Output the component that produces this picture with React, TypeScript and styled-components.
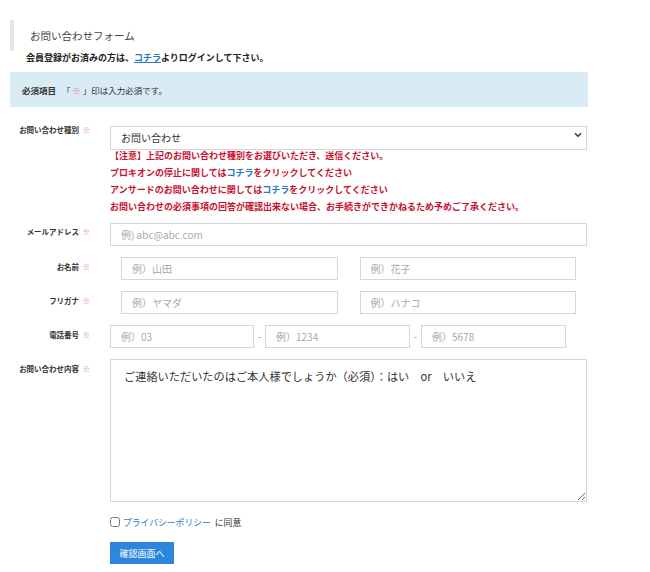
import React from 'react'
import styled, { createGlobalStyle } from 'styled-components'

const GlobalStyle = createGlobalStyle`
  html, body {
    margin: 0;
    padding: 0;
    background: #fff;
  }
  body {
    font-family: "Noto Sans CJK JP", "Noto Sans", sans-serif;
    color: #333;
  }
  * {
    box-sizing: border-box;
  }
`

const PAGE = styled.div`
  width: 588px;
  padding: 20px 0 0 10px;
`

const TITLE = styled.h2`
  margin: 0;
  height: 31px;
  display: flex;
  align-items: center;
  padding-left: 16px;
  border-left: 4px solid #e6e6e6;
  font-size: 10.5px;
  font-weight: 400;
  color: #444;
`

const LOGIN_NOTE = styled.p`
  margin: 0;
  padding-left: 16px;
  height: 13px;
  line-height: 13px;
  font-size: 9px;
  font-weight: 700;
  color: #222;
`

const LINK = styled.a<{ $underline?: boolean }>`
  color: #2a78c0;
  text-decoration: ${({ $underline }) => ($underline ? 'underline' : 'none')};
  cursor: pointer;
`

const INFO_BOX = styled.div`
  margin-top: 8px;
  height: 35px;
  display: flex;
  align-items: center;
  padding: 0 12px;
  background: #d9ebf5;
  font-size: 8.5px;
  color: #333;
  white-space: pre;
  b {
    font-weight: 700;
    margin-right: 4px;
  }
`

const MARK = styled.span`
  color: #e48d8d;
  font-weight: 400;
`

const FORM = styled.form`
  margin-top: 16px;
  display: flex;
  flex-direction: column;
`

const ROW = styled.div<{ $gap?: number }>`
  display: grid;
  grid-template-columns: 100px 477px;
  margin-bottom: ${({ $gap }) => $gap ?? 11}px;
`

const LABEL = styled.label<{ $top?: number }>`
  text-align: right;
  padding-right: 20px;
  padding-top: ${({ $top }) => $top ?? 5}px;
  font-size: 7.5px;
  font-weight: 700;
  line-height: 10px;
  color: #333;
  white-space: pre;
`

const FIELD = styled.div`
  display: flex;
  flex-direction: column;
`

const SELECT_WRAP = styled.div`
  position: relative;
  height: 24px;
  svg {
    position: absolute;
    right: 5px;
    top: 9px;
    pointer-events: none;
  }
`

const SELECT = styled.select`
  appearance: none;
  width: 100%;
  height: 24px;
  padding: 0 10px;
  border: 1px solid #d6d6d6;
  border-radius: 0;
  background: #fff;
  font-family: inherit;
  font-size: 10px;
  color: #333;
  outline: none;
`

const NOTES = styled.div`
  font-size: 9px;
  font-weight: 700;
  line-height: 17px;
  color: #c8102e;
  white-space: nowrap;
  margin-bottom: 8px;
`

const INPUT = styled.input<{ $width?: number }>`
  height: 23px;
  width: ${({ $width }) => ($width ? `${$width}px` : '100%')};
  flex: ${({ $width }) => ($width ? '0 0 auto' : '1 1 0')};
  min-width: 0;
  padding: 0 10px;
  border: 1px solid #d6d6d6;
  border-radius: 0;
  background: #fff;
  font-family: inherit;
  font-size: 10px;
  color: #333;
  outline: none;
  &::placeholder {
    color: #a8a8a8;
  }
`

const PAIR = styled.div`
  display: flex;
  gap: 22px;
  padding: 0 11px;
`

const PHONE = styled.div`
  display: flex;
  align-items: center;
`

const DASH = styled.span`
  width: 11px;
  text-align: center;
  font-size: 9px;
  color: #888;
`

const TEXTAREA = styled.textarea`
  height: 143px;
  width: 100%;
  padding: 8px 13px;
  border: 1px solid #d6d6d6;
  border-radius: 0;
  font-family: inherit;
  font-size: 11.2px;
  line-height: 16px;
  color: #333;
  outline: none;
`

const AGREE = styled.div`
  margin: 12px 0 0 100px;
  display: flex;
  align-items: center;
  height: 16px;
  font-size: 8.8px;
  color: #333;
  input {
    width: 10px;
    height: 10px;
    margin: 0 3px 0 0;
  }
  a {
    margin-right: 4px;
  }
`

const SUBMIT = styled.button`
  margin: 12px 0 0 100px;
  width: 64px;
  height: 22px;
  border: none;
  border-radius: 0;
  background: #2b86dc;
  color: #fff;
  font-family: inherit;
  font-size: 9px;
  cursor: pointer;
`

const Chevron = () => (
  <svg width="8" height="6" viewBox="0 0 8 6">
    <path d="M1 1.2 L4 4.2 L7 1.2" fill="none" stroke="#333" strokeWidth="1.5" />
  </svg>
)

const Req = () => <MARK>{'  ※'}</MARK>

export default function App() {
  return (
    <PAGE>
      <GlobalStyle />
      <TITLE>お問い合わせフォーム</TITLE>
      <LOGIN_NOTE>
        会員登録がお済みの方は、<LINK $underline>コチラ</LINK>よりログインして下さい。
      </LOGIN_NOTE>
      <INFO_BOX>
        <b>必須項目</b>{' 「 '}<MARK>※</MARK>{' 」印は入力必須です。'}
      </INFO_BOX>

      <FORM onSubmit={(e) => e.preventDefault()}>
        <ROW $gap={0}>
          <LABEL $top={2}>
            お問い合わせ種別<Req />
          </LABEL>
          <FIELD>
            <SELECT_WRAP>
              <SELECT defaultValue="inquiry">
                <option value="inquiry">お問い合わせ</option>
              </SELECT>
              <Chevron />
            </SELECT_WRAP>
            <NOTES>
              <div>【注意】上記のお問い合わせ種別をお選びいただき、送信ください。</div>
              <div>
                プロキオンの停止に関しては<LINK>コチラ</LINK>をクリックしてください
              </div>
              <div>
                アンサードのお問い合わせに関しては<LINK>コチラ</LINK>をクリックしてください
              </div>
              <div>お問い合わせの必須事項の回答が確認出来ない場合、お手続きができかねるため予めご了承ください。</div>
            </NOTES>
          </FIELD>
        </ROW>

        <ROW>
          <LABEL $top={4}>
            メールアドレス<Req />
          </LABEL>
          <INPUT placeholder="例) abc@abc.com" />
        </ROW>

        <ROW>
          <LABEL>
            お名前<Req />
          </LABEL>
          <PAIR>
            <INPUT placeholder="例）山田" />
            <INPUT placeholder="例）花子" />
          </PAIR>
        </ROW>

        <ROW>
          <LABEL>
            フリガナ<Req />
          </LABEL>
          <PAIR>
            <INPUT placeholder="例）ヤマダ" />
            <INPUT placeholder="例）ハナコ" />
          </PAIR>
        </ROW>

        <ROW>
          <LABEL>
            電話番号<Req />
          </LABEL>
          <PHONE>
            <INPUT $width={144} placeholder="例）03" />
            <DASH>-</DASH>
            <INPUT $width={145} placeholder="例）1234" />
            <DASH>-</DASH>
            <INPUT $width={145} placeholder="例）5678" />
          </PHONE>
        </ROW>

        <ROW $gap={0}>
          <LABEL>
            お問い合わせ内容<Req />
          </LABEL>
          <TEXTAREA defaultValue="ご連絡いただいたのはご本人様でしょうか（必須）：はい　or　いいえ" />
        </ROW>

        <AGREE>
          <input type="checkbox" />
          <LINK>プライバシーポリシー</LINK>に同意
        </AGREE>
        <SUBMIT type="submit">確認画面へ</SUBMIT>
      </FORM>
    </PAGE>
  )
}
